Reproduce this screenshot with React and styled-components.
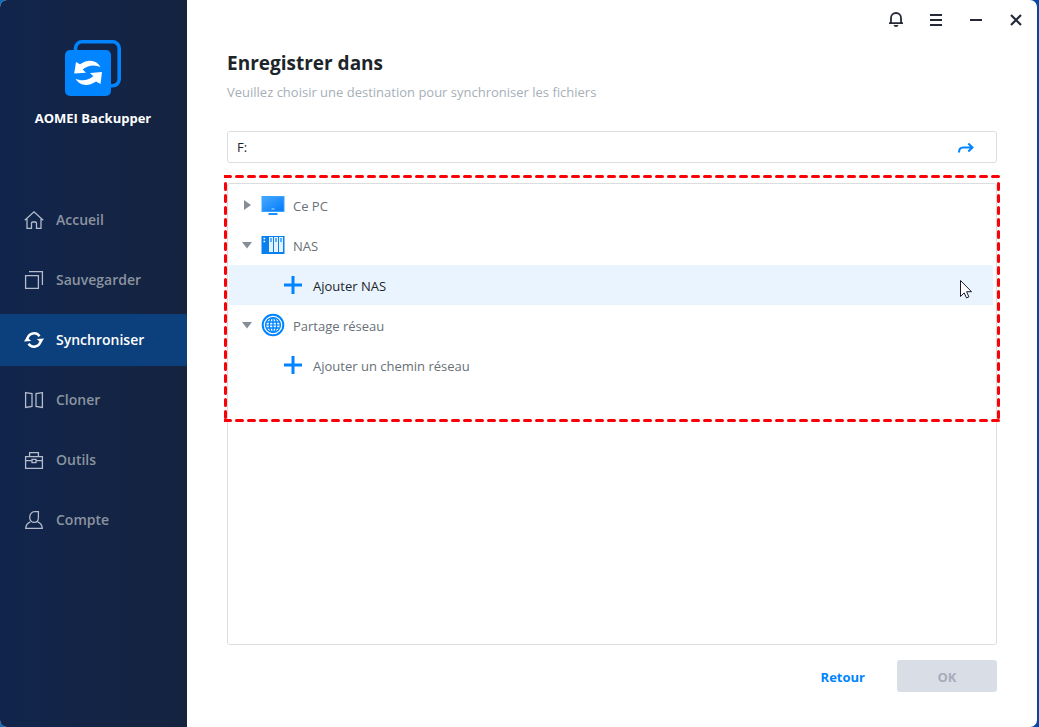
/**
 *
 * App.jsx
 *
 * Destination picker of the synchronisation wizard: the navigation side bar,
 * the path box and the tree of places to save to.
 *
 */

import React from 'react';
import styled, { createGlobalStyle } from 'styled-components';

const GlobalStyle = createGlobalStyle`
  * {
    box-sizing: border-box;
  }

  body {
    margin: 0;
    background: #0647a6;
    font-family: 'Open Sans', 'Noto Sans', sans-serif;
    font-size: 13px;
  }

  button,
  input {
    font: inherit;
  }
`;

const Backdrop = styled.div`
  display: flex;
  min-height: 100vh;
  padding-right: 2px;
  background: linear-gradient(90deg, #0a6ebd, #0647a6);
`;

const Window = styled.div`
  flex: 1;
  display: flex;
  overflow: hidden;
  border-radius: 7px;
  background: #fff;
`;

const SideBar = styled.aside`
  flex: none;
  width: 187px;
  background: linear-gradient(90deg, #11254c, #15233f);
`;

const Brand = styled.div`
  display: flex;
  flex-direction: column;
  align-items: center;
  gap: 12px;
  height: 194px;
  padding: 40px 1px 0 0;
  color: #fff;
  font-weight: 700;
  line-height: 20px;
`;

const Nav = styled.nav`
  display: flex;
  flex-direction: column;
  gap: 8px;
`;

const NavLink = styled.a`
  display: flex;
  align-items: center;
  gap: 12px;
  height: 52px;
  padding-left: 24px;
  background: ${(props) => (props.$active ? '#0c407d' : 'transparent')};
  color: ${(props) => (props.$active ? '#fff' : '#8b939f')};
  font-size: 14px;
  font-weight: 600;
  text-decoration: none;

  svg {
    color: ${(props) => (props.$active ? '#fff' : '#b4bccb')};
  }
`;

const NavLabel = styled.span`
  padding-bottom: 1px;
`;

const Main = styled.main`
  flex: 1;
  display: flex;
  flex-direction: column;
  min-width: 0;
`;

const TitleBar = styled.header`
  display: flex;
  justify-content: flex-end;
  gap: 20px;
  padding: 10px 11px 0 0;
`;

const WindowButton = styled.button`
  width: 20px;
  height: 20px;
  padding: 0;
  border: 0;
  background: none;
  color: #252936;

  svg {
    display: block;
  }
`;

const Content = styled.div`
  flex: 1;
  display: flex;
  flex-direction: column;
  padding: 20px 40px 35px;
`;

const Title = styled.h1`
  margin: 0;
  color: #1c2529;
  font-size: 19px;
  font-weight: 700;
  line-height: 26px;
`;

const Hint = styled.p`
  margin: 6px 0 29px;
  color: #a6afb8;
  line-height: 20px;
`;

const PathBox = styled.div`
  display: flex;
  align-items: center;
  height: 32px;
  padding: 0 21px 0 9px;
  border: 1px solid #dcdddf;
  border-radius: 3px;
`;

const PathInput = styled.input`
  flex: 1;
  min-width: 0;
  padding: 0;
  border: 0;
  outline: 0;
  background: none;
  color: #1c2529;
`;

const GoButton = styled.button`
  padding: 2px 0 0;
  border: 0;
  background: none;
  color: #0084ff;

  svg {
    display: block;
  }
`;

const TreePanel = styled.section`
  position: relative;
  flex: 1;
  min-height: 260px;
  margin-top: 20px;
  padding: 1px 3px 1px 1px;
  border: 1px solid #dcdddf;
  border-radius: 3px;
`;

const Tree = styled.ul`
  margin: 0;
  padding: 0;
  list-style: none;
`;

const TreeItem = styled.li`
  position: relative;
`;

const TreeButton = styled.button`
  display: flex;
  align-items: center;
  width: 100%;
  height: 40px;
  padding: 0 0 0 ${(props) => (props.$nested ? 54 : 12)}px;
  border: 0;
  background: ${(props) => (props.$selected ? '#e9f4ff' : 'transparent')};
  color: ${(props) => (props.$selected ? '#1c2529' : '#687078')};
  text-align: left;
`;

const TreeLabel = styled.span`
  padding-top: 2px;
`;

const Arrow = styled.svg`
  flex: none;
  margin-right: 8px;
`;

const TreeIcon = styled.svg`
  flex: none;
  margin-right: ${(props) => (props.$nested ? 10 : 8)}px;
`;

const Outline = styled.svg`
  position: absolute;
  top: -9px;
  left: -4px;
  width: calc(100% + 8px);
  height: 247px;
  pointer-events: none;
`;

const Pointer = styled.svg`
  position: absolute;
  top: 14px;
  right: 21px;
  pointer-events: none;
`;

const Footer = styled.footer`
  display: flex;
  justify-content: flex-end;
  gap: 10px;
  margin-top: 15px;
`;

const BackButton = styled.button`
  padding: 2px 22px 0;
  border: 0;
  background: none;
  color: #0084ff;
  font-weight: 700;
`;

const OkButton = styled.button`
  width: 100px;
  height: 32px;
  padding: 2px 0 0;
  border: 0;
  border-radius: 3px;
  background: #d9dee6;
  color: #a5adbb;
  font-weight: 700;
`;

const Logo = () => (
  <svg width="56" height="56" viewBox="0 0 56 56" fill="none">
    <rect x="10.5" y="1.8" width="43.7" height="44" rx="6.500" stroke="#0084ff" strokeWidth="3.600" />
    <rect x="0" y="10" width="46" height="46" rx="5" fill="#0084ff" />
    <path
      d="M35.500 27C31.500 20.500 24 18.500 15 24.300L11 22 9.200 33.500 21 32.800l-3.300-3.300c5.500-4.500 12-5 17.800-2.500z"
      fill="#fff"
    />
    <path
      d="M10.500 38.800C14.500 45.300 22 47.500 31 41.500l4.500 2.500L37 32l-12 1 3.300 3.300c-5.500 4.500-12 5-17.800 2.500z"
      fill="#fff"
    />
  </svg>
);

const SvgIcon = ({ children }) => (
  <svg width="20" height="20" viewBox="0 0 20 20" fill="none" stroke="currentColor" strokeWidth="1.300">
    {children}
  </svg>
);

const HomeIcon = () => (
  <SvgIcon>
    <path d="M.8 10.200 10 1.800l9.200 8.400M3 9v9.300h4.500V13a1 1 0 0 1 1-1h3a1 1 0 0 1 1 1v5.300H17V9" />
  </SvgIcon>
);

const BackupIcon = () => (
  <SvgIcon>
    <path d="M1.600 5.600h12.800v12.800H1.600zM5 1.600h13.400V15" />
  </SvgIcon>
);

const SyncIcon = () => (
  <SvgIcon>
    <path d="M3.500 8.500A6.700 6.700 0 0 1 15.500 6.200M16.500 11.500A6.700 6.700 0 0 1 4.500 13.800" strokeWidth="2.500" />
    <path d="M0 11.500 2.800 7l4.400 4zM20 8.500 17.200 13l-4.400-4z" fill="currentColor" stroke="none" />
  </SvgIcon>
);

const CloneIcon = () => (
  <SvgIcon>
    <path d="M1.600 2.600 8 3.600v12.800l-6.400 1zM18.400 2.600 12 3.600v12.800l6.400 1z" />
  </SvgIcon>
);

const ToolsIcon = () => (
  <SvgIcon>
    <path d="M1.600 6.600h16.800v11.800H1.600zM5.600 6.600v-4h8.800v4M1.600 10.600h6.200M12.200 10.600h6.200M8 9.300h4v3.400H8z" />
  </SvgIcon>
);

const AccountIcon = () => (
  <SvgIcon>
    <path d="M14.400 1.600v5.800c0 3-1.800 5-4.200 5S5.700 10.300 5.700 7.300s2-5.700 5-5.700zM6.300 11.800C3.500 13 1.900 15 1.700 18.400h16.600c-.2-3.400-1.800-5.400-4.600-6.600" />
  </SvgIcon>
);

const BellIcon = () => (
  <SvgIcon>
    <path d="M5 13.200V8a5 5 0 0 1 10 0v5.200M3 13.200h14" strokeWidth="1.800" />
    <path d="M7.500 15h5c-.4 1.300-1.300 2-2.500 2s-2.100-.7-2.500-2z" fill="currentColor" stroke="none" />
  </SvgIcon>
);

const MenuIcon = () => (
  <SvgIcon>
    <path d="M4 5h12M4 10h12M4 15h12" strokeWidth="2" />
  </SvgIcon>
);

const MinimizeIcon = () => (
  <SvgIcon>
    <path d="M4 10h12" strokeWidth="2" />
  </SvgIcon>
);

const CloseIcon = () => (
  <SvgIcon>
    <path d="m5 5 10 10M15 5 5 15" strokeWidth="2.200" />
  </SvgIcon>
);

const GoIcon = () => (
  <svg width="18" height="14" viewBox="0 0 18 14" fill="none" stroke="currentColor" strokeWidth="2">
    <path d="M2 11.500c0-3 1-5 4-5h9M11.300 2.500l4.200 4-4.200 4" />
  </svg>
);

const PcIcon = () => (
  <TreeIcon width="24" height="20" viewBox="0 0 24 20">
    <defs>
      <linearGradient id="screen" x1="0" y1="0" x2="1" y2="1">
        <stop offset="0" stopColor="#49aaff" />
        <stop offset="1" stopColor="#0079fb" />
      </linearGradient>
    </defs>
    <rect x="1" y="1.500" width="22" height="15" fill="url(#screen)" stroke="#3aa2fb" />
    <path d="M10.500 14h3" stroke="#b9deff" />
    <path d="M7.500 19h9" stroke="#1e90ff" strokeWidth="2" />
  </TreeIcon>
);

const NasIcon = () => (
  <TreeIcon width="24" height="20" viewBox="0 0 24 20">
    <rect x=".5" y="1" width="23" height="18" fill="#0a7fee" />
    <path d="M2.500 3.500H4.200M2.500 6.500H4.200" stroke="#fff" strokeWidth="1.300" />
    <path d="M8 2h4v15H8zM13 2h4v15h-4zM18 2h4v15h-4z" fill="#e4f2ff" />
    <path d="M10 3v4M15 3v4M20 3v4" stroke="#0084ff" strokeWidth="1.200" />
  </TreeIcon>
);

const GlobeIcon = () => (
  <TreeIcon width="24" height="24" viewBox="0 0 24 24" fill="none" stroke="#0084ff">
    <circle cx="12" cy="12" r="10.300" strokeWidth="2" />
    <circle cx="12" cy="12" r="7.400" strokeWidth="1.400" />
    <ellipse cx="12" cy="12" rx="3.700" ry="7.400" strokeWidth="1.400" />
    <path d="M12 4.700v14.600M5.500 9h13M5.500 15h13" strokeWidth="1.400" />
    <path d="M4.700 12h14.600" strokeWidth="1" />
  </TreeIcon>
);

const PlusIcon = () => (
  <TreeIcon $nested width="20" height="20" viewBox="0 0 20 20">
    <path d="M10 1v18M1 10h18" stroke="#0084ff" strokeWidth="3" />
  </TreeIcon>
);

const ExpandArrow = ({ open }) => (
  <Arrow width="12" height="12" viewBox="0 0 12 12" fill="#858e96">
    <path d={open ? 'M1 3h10L6 9.500z' : 'M3 1v10l7-5z'} />
  </Arrow>
);

const navItems = [
  { label: 'Accueil', icon: HomeIcon },
  { label: 'Sauvegarder', icon: BackupIcon },
  { label: 'Synchroniser', icon: SyncIcon, active: true },
  { label: 'Cloner', icon: CloneIcon },
  { label: 'Outils', icon: ToolsIcon },
  { label: 'Compte', icon: AccountIcon },
];

const windowButtons = [
  { label: 'Notifications', icon: BellIcon },
  { label: 'Menu', icon: MenuIcon },
  { label: 'Réduire', icon: MinimizeIcon },
  { label: 'Fermer', icon: CloseIcon },
];

const places = [
  { label: 'Ce PC', icon: PcIcon },
  { label: 'NAS', icon: NasIcon, action: 'Ajouter NAS', selected: true },
  { label: 'Partage réseau', icon: GlobeIcon, action: 'Ajouter un chemin réseau' },
];

const dash = { stroke: '#fb0007', strokeWidth: 3, strokeDasharray: '6 6', strokeLinecap: 'round' };

const HighlightOutline = () => (
  <Outline aria-hidden="true">
    <line x1=".5" y1="1.500" x2="100%" y2="1.500" {...dash} />
    <line x1=".5" y1="245.500" x2="100%" y2="245.500" {...dash} />
    <line x1="1.500" y1="8.500" x2="1.500" y2="245" {...dash} />
    <svg x="100%" overflow="visible">
      <line x1="-1.500" y1="8.500" x2="-1.500" y2="245" {...dash} />
    </svg>
  </Outline>
);

const MousePointer = () => (
  <Pointer width="13" height="21" viewBox="0 0 13 21" aria-hidden="true">
    <path
      d="M1.500 1.500v16l3.700-3.600 2.300 5 2.400-1-2.300-5.200h4.900z"
      fill="#fff"
      stroke="#1e1a2c"
      strokeWidth="1"
    />
  </Pointer>
);

const Place = ({ place }) => {
  const Icon = place.icon;
  return (
    <TreeItem>
      <TreeButton type="button" aria-expanded={Boolean(place.action)}>
        <ExpandArrow open={Boolean(place.action)} />
        <Icon />
        <TreeLabel>{place.label}</TreeLabel>
      </TreeButton>
      {place.action && (
        <Tree>
          <TreeItem>
            <TreeButton type="button" $nested $selected={place.selected}>
              <PlusIcon />
              <TreeLabel>{place.action}</TreeLabel>
            </TreeButton>
            {place.selected && <MousePointer />}
          </TreeItem>
        </Tree>
      )}
    </TreeItem>
  );
};

const App = () => (
  <Backdrop>
    <GlobalStyle />
    <Window>
      <SideBar>
        <Brand>
          <Logo />
          AOMEI Backupper
        </Brand>
        <Nav>
          {navItems.map(({ label, icon: Icon, active }) => (
            <NavLink key={label} href="#" $active={active} aria-current={active ? 'page' : undefined}>
              <Icon />
              <NavLabel>{label}</NavLabel>
            </NavLink>
          ))}
        </Nav>
      </SideBar>

      <Main>
        <TitleBar>
          {windowButtons.map(({ label, icon: Icon }) => (
            <WindowButton key={label} type="button" aria-label={label}>
              <Icon />
            </WindowButton>
          ))}
        </TitleBar>
        <Content>
          <Title>Enregistrer dans</Title>
          <Hint>Veuillez choisir une destination pour synchroniser les fichiers</Hint>
          <PathBox>
            <PathInput type="text" aria-label="Chemin" defaultValue="F:" />
            <GoButton type="button" aria-label="Ouvrir le chemin">
              <GoIcon />
            </GoButton>
          </PathBox>
          <TreePanel>
            <Tree>
              {places.map((place) => (
                <Place key={place.label} place={place} />
              ))}
            </Tree>
            <HighlightOutline />
          </TreePanel>
          <Footer>
            <BackButton type="button">Retour</BackButton>
            <OkButton type="button" disabled>
              OK
            </OkButton>
          </Footer>
        </Content>
      </Main>
    </Window>
  </Backdrop>
);

export default App;
